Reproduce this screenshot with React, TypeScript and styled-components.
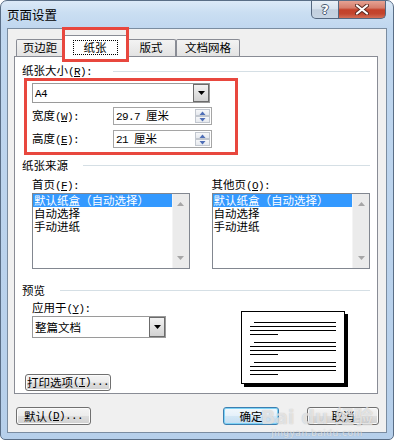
import React from "react";
import styled, { createGlobalStyle, css } from "styled-components";

const GlobalStyle = createGlobalStyle`
  html, body { margin: 0; padding: 0; background: #ffffff; }
  body {
    font-family: "Noto Sans CJK SC", "Liberation Mono", sans-serif;
    font-size: 11.5px;
    color: #000;
    overflow: hidden;
  }
  * { box-sizing: border-box; }
`;

const Window = styled.div`
  position: relative;
  width: 394px;
  height: 440px;
  border: 1px solid #5a6e86;
  border-radius: 7px 7px 5px 5px;
  background: linear-gradient(180deg, #dce9f7 0px, #cadef2 12px, #c0d7ef 27px, #bad2ec 60%, #b6cfea 100%);
  padding: 0 6px 6px 6px;
  display: flex;
  flex-direction: column;
  overflow: hidden;
`;

const TitleBar = styled.div`
  height: 27px;
  display: flex;
  align-items: flex-start;
  flex: none;
`;

const Title = styled.div`
  margin-top: 6px;
  font-size: 12.5px;
  line-height: 15px;
  color: #000;
`;

const Caption = styled.div`
  margin-left: auto;
  margin-right: 1px;
  display: flex;
`;

const CapButton = styled.div<{ $w: number; $close?: boolean }>`
  width: ${(p) => p.$w}px;
  height: 18px;
  border: 1px solid #55677f;
  border-top: none;
  display: flex;
  align-items: center;
  justify-content: center;
  ${(p) =>
    p.$close
      ? css`
          border-left: none;
          border-radius: 0 0 5px 0;
          background: linear-gradient(180deg, #e6a293 0%, #d67e6c 40%, #c4412a 52%, #c3452e 75%, #d36e57 100%);
        `
      : css`
          border-radius: 0 0 0 5px;
          background: linear-gradient(180deg, #e9eff6 0%, #d7e2ee 45%, #c2cfde 52%, #c6d4e3 100%);
        `}
`;

const HelpGlyph = styled.span`
  font-family: "DejaVu Sans", sans-serif;
  font-weight: bold;
  font-size: 13px;
  line-height: 13px;
  color: #ffffff;
  text-shadow: -1px 0 #4a5a70, 1px 0 #4a5a70, 0 -1px #4a5a70, 0 1px #4a5a70;
`;

const Client = styled.div`
  flex: 1;
  border: 1px solid #7a8ca0;
  background: #f0f0f0;
  padding: 6px 8px 7px 6px;
  display: flex;
  flex-direction: column;
`;

const TabStrip = styled.div`
  height: 21px;
  display: flex;
  align-items: flex-start;
  padding-left: 2px;
  position: relative;
  z-index: 2;
  flex: none;
`;

const Tab = styled.div<{ $w: number; $active?: boolean }>`
  width: ${(p) => p.$w}px;
  height: 17px;
  margin-top: 4px;
  border: 1px solid #898c95;
  border-bottom: none;
  border-radius: 2px 2px 0 0;
  background: linear-gradient(180deg, #f3f3f3 0%, #ebebeb 50%, #e3e3e3 100%);
  text-align: center;
  line-height: 15px;
  white-space: nowrap;
  ${(p) =>
    p.$active &&
    css`
      position: relative;
      z-index: 1;
      height: 22px;
      margin: 0 -2px;
      background: #ffffff;
      display: flex;
      justify-content: center;
      align-items: flex-start;
      padding-top: 4px;
    `}
`;

const FocusBox = styled.span`
  display: inline-block;
  border: 1px dotted #000;
  padding: 0 10px;
  line-height: 13px;
`;

const Page = styled.div`
  position: relative;
  z-index: 1;
  height: 338px;
  flex: none;
  background: #ffffff;
  border: 1px solid #898c95;
  padding: 8px 7px 0 7px;
  display: flex;
  flex-direction: column;
`;

const GroupHeader = styled.div<{ $mt?: number }>`
  display: flex;
  align-items: center;
  height: 13px;
  line-height: 13px;
  margin-top: ${(p) => p.$mt ?? 0}px;
`;

const HeaderLabel = styled.span<{ $w: number }>`
  width: ${(p) => p.$w}px;
  white-space: nowrap;
  flex: none;
`;

const HeaderLine = styled.div`
  flex: 1;
  height: 1px;
  background: #d5dfe5;
`;

const Indent = styled.div<{ $mt?: number }>`
  padding-left: 10px;
  margin-top: ${(p) => p.$mt ?? 0}px;
  display: flex;
  flex-direction: column;
`;

const Combo = styled.div<{ $w: number; $h: number; $mt?: number }>`
  width: ${(p) => p.$w}px;
  height: ${(p) => p.$h}px;
  margin-top: ${(p) => p.$mt ?? 0}px;
  border: 1px solid #9a9a9a;
  background: #ffffff;
  display: flex;
  align-items: center;
  padding-left: 2px;
  white-space: nowrap;
`;

const ComboText = styled.span`
  flex: 1;
  line-height: 13px;
`;

const DropBtn = styled.div`
  width: 16px;
  align-self: stretch;
  border: 1px solid #6b6b6b;
  background: linear-gradient(180deg, #f2f2f2 0%, #e2e2e2 50%, #d2d2d2 100%);
  display: flex;
  align-items: center;
  justify-content: center;
`;

const FieldRow = styled.div<{ $mt: number }>`
  display: flex;
  align-items: center;
  height: 18px;
  margin-top: ${(p) => p.$mt}px;
`;

const FieldLabel = styled.span`
  width: 81px;
  line-height: 13px;
  white-space: nowrap;
`;

const SpinBox = styled.div`
  width: 99px;
  height: 18px;
  border: 1px solid #a5a5a5;
  background: #ffffff;
  display: flex;
  align-items: center;
  padding-left: 2px;
  white-space: nowrap;
`;

const SpinBtns = styled.div`
  width: 15px;
  align-self: stretch;
  margin: 1px;
  display: flex;
  flex-direction: column;
`;

const SpinHalf = styled.div`
  flex: 1;
  border: 1px solid #c2c7cf;
  background: linear-gradient(180deg, #f6f7f9 0%, #e6e9ee 100%);
  display: flex;
  align-items: center;
  justify-content: center;
`;

const SourceRow = styled.div`
  display: flex;
  gap: 22px;
  padding-left: 10px;
  margin-top: 6px;
`;

const SourceCol = styled.div<{ $w: number }>`
  width: ${(p) => p.$w}px;
  display: flex;
  flex-direction: column;
`;

const SmallLabel = styled.span`
  line-height: 13px;
  height: 13px;
  white-space: nowrap;
`;

const ListBox = styled.div`
  height: 76px;
  margin-top: 2px;
  border: 1px solid #828790;
  background: #ffffff;
  display: flex;
`;

const ListItems = styled.div`
  flex: 1;
  display: flex;
  flex-direction: column;
`;

const ListItem = styled.div<{ $sel?: boolean }>`
  line-height: 13px;
  height: 13px;
  padding-left: 1px;
  white-space: nowrap;
  ${(p) =>
    p.$sel &&
    css`
      background: #3399ff;
      color: #ffffff;
    `}
`;

const ScrollBar = styled.div`
  width: 17px;
  background: #ebebeb;
  border-left: 1px solid #f4f4f4;
  display: flex;
  flex-direction: column;
  justify-content: space-between;
`;

const ScrollCell = styled.div`
  height: 20px;
  display: flex;
  align-items: center;
  justify-content: center;
`;

const PreviewRow = styled.div`
  flex: 1;
  display: flex;
  margin-top: 4px;
`;

const PreviewLeft = styled.div`
  width: 219px;
  display: flex;
  flex-direction: column;
`;

const Button = styled.div<{ $w: number; $h?: number; $primary?: boolean }>`
  width: ${(p) => p.$w}px;
  height: ${(p) => p.$h ?? 18}px;
  border: 1px solid #707070;
  border-radius: 3px;
  background: linear-gradient(180deg, #f4f4f4 0%, #ececec 48%, #dedede 52%, #d0d0d0 100%);
  box-shadow: inset 0 0 0 1px #fbfbfb;
  display: flex;
  align-items: center;
  justify-content: center;
  line-height: 13px;
  white-space: nowrap;
  ${(p) =>
    p.$primary &&
    css`
      border-color: #3c7fb1;
      box-shadow: inset 0 0 0 1px #7ed3f6;
      background: linear-gradient(180deg, #f2f8fc 0%, #e5f1fa 48%, #d3e7f5 52%, #c4def2 100%);
    `}
`;

const PrintButton = styled(Button)`
  margin-top: auto;
  margin-bottom: 2px;
  margin-left: 3px;
`;

const PreviewPic = styled.svg`
  margin-top: 10px;
  flex: none;
`;

const BottomBar = styled.div`
  height: 18px;
  margin-top: 13px;
  display: flex;
  padding-left: 2px;
  margin-right: -1px;
  flex: none;
`;

const OkSlot = styled.div`
  margin-left: auto;
  margin-right: 28px;
`;

const RedBox = styled.div<{ $l: number; $t: number; $w: number; $h: number }>`
  position: absolute;
  left: ${(p) => p.$l}px;
  top: ${(p) => p.$t}px;
  width: ${(p) => p.$w}px;
  height: ${(p) => p.$h}px;
  border: 3px solid #e8473e;
  z-index: 10;
  pointer-events: none;
`;

const Watermark = styled.div`
  position: absolute;
  right: 20px;
  bottom: 1px;
  z-index: 9;
  display: flex;
  flex-direction: column;
  align-items: center;
  color: rgba(255, 255, 255, 0.6);
  text-shadow: 0 0 1px rgba(140, 140, 140, 0.6);
  pointer-events: none;
  font-family: "DejaVu Sans", "Noto Sans CJK SC", sans-serif;
`;

const WmMain = styled.span`
  font-size: 19px;
  font-weight: bold;
  line-height: 22px;
`;

const WmSub = styled.span`
  font-size: 9px;
  line-height: 10px;
  letter-spacing: 0.5px;
`;

/* Latin text run, matching the 6px-per-character width of the dialog font */
const Lat = styled.span`
  font-family: "Liberation Mono", monospace;
  font-size: 11px;
  letter-spacing: -0.6px;
`;

const U = styled.span`
  text-decoration: underline;
`;

const Key = ({ k, tail = "" }: { k: string; tail?: string }) => (
  <Lat>
    (<U>{k}</U>){tail}
  </Lat>
);

const DownTri = ({ color = "#000" }: { color?: string }) => (
  <svg width="7" height="4" viewBox="0 0 7 4">
    <polygon points="0,0 7,0 3.5,4" fill={color} />
  </svg>
);

const UpTri = ({ color = "#000" }: { color?: string }) => (
  <svg width="7" height="4" viewBox="0 0 7 4">
    <polygon points="0,4 7,4 3.5,0" fill={color} />
  </svg>
);

const SpinSmallUp = () => (
  <svg width="7" height="4" viewBox="0 0 7 4">
    <polygon points="0.5,4 6.5,4 3.5,0.5" fill="#4f6eb6" />
  </svg>
);
const SpinSmallDown = () => (
  <svg width="7" height="4" viewBox="0 0 7 4">
    <polygon points="0.5,0 6.5,0 3.5,3.5" fill="#4f6eb6" />
  </svg>
);

const Spinner = () => (
  <SpinBtns>
    <SpinHalf>
      <SpinSmallUp />
    </SpinHalf>
    <SpinHalf>
      <SpinSmallDown />
    </SpinHalf>
  </SpinBtns>
);

const Source = ({ label, w }: { label: React.ReactNode; w: number }) => (
  <SourceCol $w={w}>
    <SmallLabel>{label}</SmallLabel>
    <ListBox>
      <ListItems>
        <ListItem $sel>默认纸盒（自动选择）</ListItem>
        <ListItem>自动选择</ListItem>
        <ListItem>手动进纸</ListItem>
      </ListItems>
      <ScrollBar>
        <ScrollCell>
          <UpTri color="#a6a6a6" />
        </ScrollCell>
        <ScrollCell>
          <DownTri color="#a6a6a6" />
        </ScrollCell>
      </ScrollBar>
    </ListBox>
  </SourceCol>
);

const PageDrawing = () => {
  const groups = [11, 31, 51];
  return (
    <PreviewPic width="107" height="76" viewBox="0 0 107 76">
      <rect x="3" y="3" width="104" height="73" fill="#000" />
      <rect x="0.5" y="0.5" width="103" height="72" fill="#fff" stroke="#000" />
      {groups.map((g) => (
        <g key={g} stroke="#000" strokeWidth="1.2">
          <line x1="13" y1={g + 0.5} x2="95" y2={g + 0.5} />
          <line x1="9" y1={g + 4.5} x2="95" y2={g + 4.5} />
          <line x1="9" y1={g + 8.5} x2="95" y2={g + 8.5} />
          <line x1="9" y1={g + 12.5} x2="37" y2={g + 12.5} />
        </g>
      ))}
    </PreviewPic>
  );
};

export default function App() {
  return (
    <>
      <GlobalStyle />
      <Window>
        <TitleBar>
          <Title>页面设置</Title>
          <Caption>
            <CapButton $w={28}>
              <HelpGlyph>?</HelpGlyph>
            </CapButton>
            <CapButton $w={47} $close>
              <svg width="14" height="11" viewBox="0 0 14 11">
                <path d="M2 1.5 L12 9.5 M12 1.5 L2 9.5" stroke="#5b2a22" strokeWidth="4" strokeLinecap="round" />
                <path d="M2 1.5 L12 9.5 M12 1.5 L2 9.5" stroke="#ffffff" strokeWidth="2.2" strokeLinecap="round" />
              </svg>
            </CapButton>
          </Caption>
        </TitleBar>
        <Client>
          <TabStrip>
            <Tab $w={48}>页边距</Tab>
            <Tab $w={66} $active>
              <FocusBox>纸张</FocusBox>
            </Tab>
            <Tab $w={50}>版式</Tab>
            <Tab $w={64}>文档网格</Tab>
          </TabStrip>
          <Page>
            <GroupHeader>
              <HeaderLabel $w={91}>
                纸张大小<Key k="R" tail=":" />
              </HeaderLabel>
              <HeaderLine />
            </GroupHeader>
            <Indent $mt={5}>
              <Combo $w={178} $h={20}>
                <ComboText>
                  <Lat>A4</Lat>
                </ComboText>
                <DropBtn>
                  <DownTri />
                </DropBtn>
              </Combo>
              <FieldRow $mt={4}>
                <FieldLabel>
                  宽度<Key k="W" tail=":" />
                </FieldLabel>
                <SpinBox>
                  <ComboText>
                    <Lat>29.7 </Lat>厘米
                  </ComboText>
                  <Spinner />
                </SpinBox>
              </FieldRow>
              <FieldRow $mt={5}>
                <FieldLabel>
                  高度<Key k="E" tail=":" />
                </FieldLabel>
                <SpinBox>
                  <ComboText>
                    <Lat>21 </Lat>厘米
                  </ComboText>
                  <Spinner />
                </SpinBox>
              </FieldRow>
            </Indent>

            <GroupHeader $mt={11}>
              <HeaderLabel $w={61}>纸张来源</HeaderLabel>
              <HeaderLine />
            </GroupHeader>
            <SourceRow>
              <Source
                w={158}
                label={
                  <>
                    首页<Key k="F" tail=":" />
                  </>
                }
              />
              <Source
                w={159}
                label={
                  <>
                    其他页<Key k="O" tail=":" />
                  </>
                }
              />
            </SourceRow>

            <GroupHeader $mt={15}>
              <HeaderLabel $w={38}>预览</HeaderLabel>
              <HeaderLine />
            </GroupHeader>
            <PreviewRow>
              <PreviewLeft>
                <Indent>
                  <SmallLabel>
                    应用于<Key k="Y" tail=":" />
                  </SmallLabel>
                  <Combo $w={134} $h={22} $mt={2}>
                    <ComboText>整篇文档</ComboText>
                    <DropBtn>
                      <DownTri />
                    </DropBtn>
                  </Combo>
                </Indent>
                <PrintButton $w={86} $h={17}>
                  打印选项<Key k="T" tail="..." />
                </PrintButton>
              </PreviewLeft>
              <PageDrawing />
            </PreviewRow>
          </Page>
          <BottomBar>
            <Button $w={75}>
              默认<Key k="D" tail="..." />
            </Button>
            <OkSlot>
              <Button $w={56} $primary>
                确定
              </Button>
            </OkSlot>
            <Button $w={72}>取消</Button>
          </BottomBar>
        </Client>
        <RedBox $l={61} $t={26} $w={67} $h={35} />
        <RedBox $l={23} $t={77} $w={214} $h={77} />
        <Watermark>
          <WmMain>Bai du 经验</WmMain>
          <WmSub>jingyan.baidu.com</WmSub>
        </Watermark>
      </Window>
    </>
  );
}
